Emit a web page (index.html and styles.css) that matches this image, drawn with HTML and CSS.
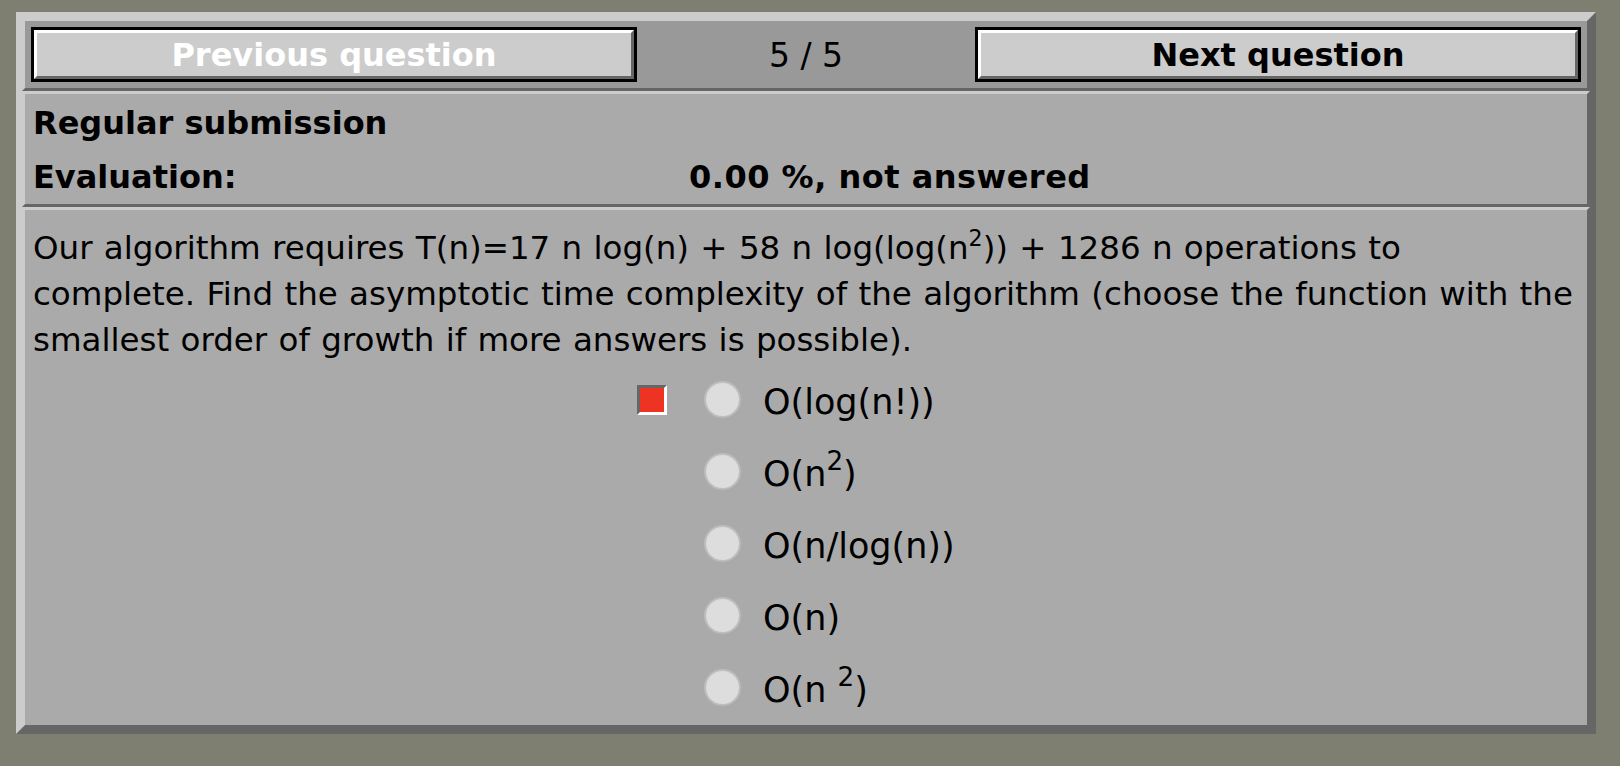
FILE: index.html
```html
<!DOCTYPE html>
<html lang="en">
<head>
<meta charset="utf-8">
<title>Question 5 / 5</title>
<link rel="stylesheet" href="styles.css">
</head>
<body>
<div class="panel">
  <div class="sec head">
    <button class="btn btn-disabled" type="button"><span class="btn-face">Previous question</span></button>
    <div class="count">5 / 5</div>
    <button class="btn" type="button"><span class="btn-face">Next question</span></button>
  </div>
  <div class="sec info">
    <div class="info-row"><span class="strong">Regular submission</span></div>
    <div class="info-row eval">
      <span class="strong">Evaluation:</span>
      <span class="strong value">0.00 %, not answered</span>
    </div>
  </div>
  <div class="sec question">
    <p class="q-text">Our algorithm requires T(n)=17 n log(n) + 58 n log(log(n<sup>2</sup>)) + 1286 n operations to<br>complete. Find the asymptotic time complexity of the algorithm (choose the function with the smallest order of growth if more answers is possible).</p>
    <div class="opts">
      <div class="opt"><span class="mark mark-wrong"></span><span class="radio"></span><span class="lbl">O(log(n!))</span></div>
      <div class="opt"><span class="mark"></span><span class="radio"></span><span class="lbl">O(n<sup>2</sup>)</span></div>
      <div class="opt"><span class="mark"></span><span class="radio"></span><span class="lbl">O(n/log(n))</span></div>
      <div class="opt"><span class="mark"></span><span class="radio"></span><span class="lbl">O(n)</span></div>
      <div class="opt"><span class="mark"></span><span class="radio"></span><span class="lbl">O(n <sup>2</sup>)</span></div>
    </div>
  </div>
</div>
</body>
</html>
```

FILE: styles.css
```css
html, body {
  margin: 0;
  padding: 0;
}
body {
  background: #7f7f71;
  font-family: "DejaVu Sans", Verdana, sans-serif;
  color: #000;
  height: 766px;
  overflow: hidden;
}
.panel {
  margin: 12px 0 0 16px;
  width: 1580px;
  box-sizing: border-box;
  border: 6px solid;
  border-color: #cccccc #666666 #666666 #cccccc;
  background: #aaaaaa;
}
.sec {
  border: 3px solid;
  border-color: #cccccc #666666 #666666 #cccccc;
}
.head {
  background: #999999;
  display: grid;
  grid-template-columns: 606px 1fr 606px;
  padding: 6px;
  height: 55px;
}
.btn {
  display: block;
  margin: 0;
  padding: 0;
  border: 3px solid #000;
  background: none;
  height: 55px;
  font: inherit;
  cursor: pointer;
}
.btn-face {
  display: block;
  box-sizing: content-box;
  height: 42px;
  padding-top: 1px;
  border: 3px solid;
  border-color: #ffffff #666666 #666666 #ffffff;
  background: #cccccc;
  font-weight: bold;
  font-size: 32px;
  line-height: 43px;
  color: #000;
  text-align: center;
}
.btn-disabled .btn-face {
  color: #ffffff;
}
.count {
  font-size: 33px;
  line-height: 55px;
  text-align: center;
  padding-top: 1px;
}
.info {
  padding: 2px 8px 0;
  height: 108px;
}
.info-row {
  height: 54px;
  line-height: 54px;
}
.strong {
  font-weight: bold;
  font-size: 32px;
}
.value {
  letter-spacing: 0.5px;
}
.eval {
  display: grid;
  grid-template-columns: 656px 1fr;
}
.question {
  padding: 15px 8px 0;
  height: 500px;
}
.q-text {
  margin: 0;
  font-size: 32.5px;
  word-spacing: 1px;
  line-height: 46px;
}
sup {
  font-size: 0.68em;
  line-height: 0;
  vertical-align: 0.6em;
}
.opts {
  padding-left: 604px;
}
.opt {
  display: flex;
  align-items: center;
  height: 72px;
}
.mark {
  width: 30px;
  height: 30px;
  flex: none;
  box-sizing: border-box;
  margin-top: 2px;
}
.mark-wrong {
  border: 3px solid;
  border-color: #666666 #ffffff #ffffff #666666;
  background: #ee3322;
}
.radio {
  width: 37px;
  height: 37px;
  box-sizing: border-box;
  border-radius: 50%;
  border: 2px solid #bdbdbd;
  background: #dddddd;
  margin-left: 37px;
  flex: none;
}
.lbl {
  margin-left: 22px;
  font-size: 35px;
  line-height: 72px;
  padding-top: 6px;
}
.lbl sup {
  font-size: 0.75em;
}
```
